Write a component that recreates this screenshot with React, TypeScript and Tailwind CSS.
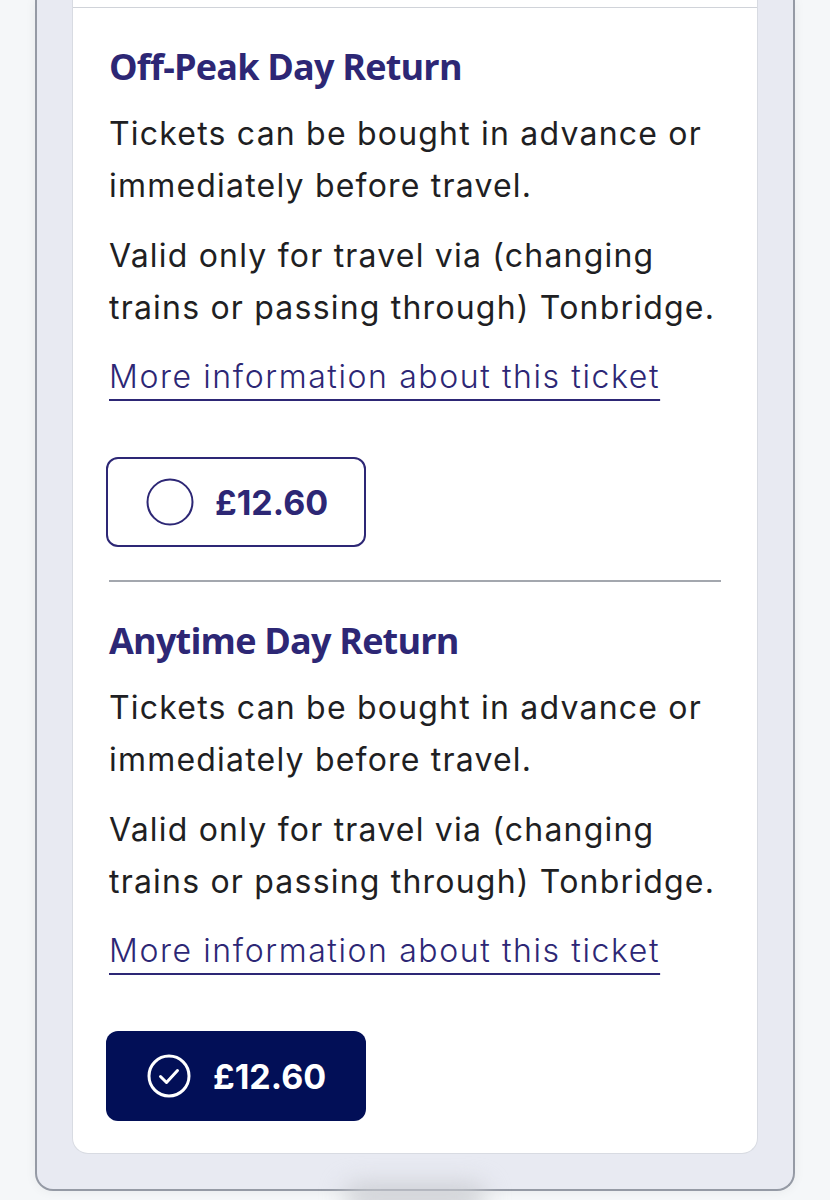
import React from 'react'

const body = { fontFamily: 'Inter, "Noto Sans", sans-serif' }
const heading = { fontFamily: '"Open Sans", "Noto Sans", sans-serif' }

function RadioIcon({ checked }: { checked: boolean }) {
  if (!checked) {
    return (
      <svg width="48" height="48" viewBox="0 0 48 48" fill="none">
        <circle cx="24" cy="24" r="22.5" stroke="#2d2775" strokeWidth="2" />
      </svg>
    )
  }
  return (
    <svg width="46" height="46" viewBox="0 0 46 46" fill="none">
      <circle cx="23" cy="23" r="20" stroke="#ffffff" strokeWidth="3" />
      <path d="M14.5 23.5 L20.5 29.5 L31.5 17.5" stroke="#ffffff" strokeWidth="3" strokeLinecap="round" strokeLinejoin="round" />
    </svg>
  )
}

function PriceButton({ price, selected }: { price: string; selected: boolean }) {
  return (
    <button
      className={
        selected
          ? '-ml-[3px] flex h-[90px] w-[260px] items-center gap-[21px] rounded-[12px] bg-[#020f57] pl-[40px]'
          : '-ml-[3px] flex h-[90px] w-[260px] items-center gap-[21px] rounded-[12px] border-2 border-[#2d2775] bg-white pl-[38px]'
      }
    >
      <RadioIcon checked={selected} />
      <span
        className={selected ? 'text-[34px] font-bold text-white' : 'text-[34px] font-bold text-[#2d2775]'}
        style={body}
      >
        {price}
      </span>
    </button>
  )
}

function TicketOption({ title, selected }: { title: string; selected: boolean }) {
  return (
    <div className="pt-[37px]">
      <h2
        className="text-[36px] leading-[44px] font-bold tracking-[-0.8px] text-[#2d2775]"
        style={heading}
      >
        {title}
      </h2>
      <div
        className="mt-[19px] space-y-[18px] text-[32px] leading-[52px] tracking-[1.2px] text-[#1f1f23]"
        style={body}
      >
        <p>Tickets can be bought in advance or immediately before travel.</p>
        <p>Valid only for travel via (changing trains or passing through) Tonbridge.</p>
      </div>
      <div className="mt-[17px] text-[32px] leading-[52px] tracking-[1.6px]" style={body}>
        <a
          href="#"
          className="font-light text-[#2d2775] underline decoration-2 underline-offset-[11px]"
        >
          More information about this ticket
        </a>
      </div>
      <div className="mt-[54px]">
        <PriceButton price="£12.60" selected={selected} />
      </div>
    </div>
  )
}

export default function App() {
  return (
    <div className="h-[1200px] overflow-hidden bg-[#f5f7f9]">
      <div className="mx-[35px] rounded-b-[18px] border-x-2 border-b-2 border-[#959aa5] bg-[#e8eaf2] px-[35px] pb-[35px] shadow-[0_0_12px_rgba(0,0,0,0.06)]">
        <div className="rounded-b-[16px] border-x border-b border-[#d8dbe2] bg-white">
          <div className="h-[7px]" />
          <div className="h-px bg-[#d0d3d9]" />
          <div className="px-[36px] pb-[32px]">
            <TicketOption title="Off-Peak Day Return" selected={false} />
            <div className="mt-[33px] h-[2px] bg-[#a3a7ae]" />
            <TicketOption title="Anytime Day Return" selected={true} />
          </div>
        </div>
      </div>
      <div className="flex justify-center">
        <div className="-mt-[6px] h-[24px] w-[140px] rounded-full bg-[#c9cbd0] blur-md" />
      </div>
    </div>
  )
}
